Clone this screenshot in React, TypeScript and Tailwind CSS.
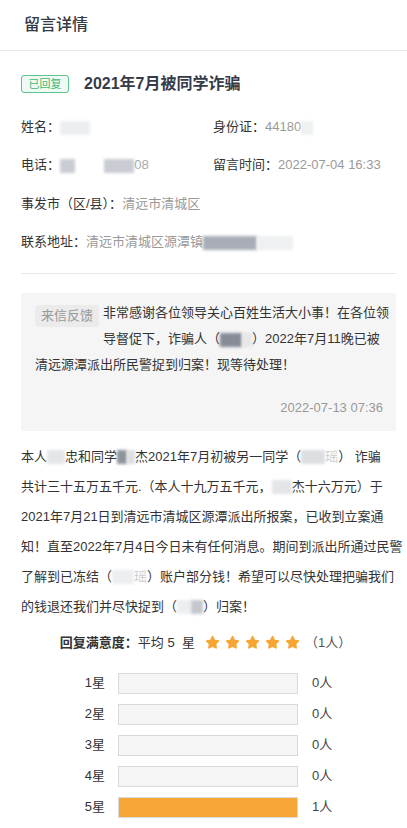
const font = { fontFamily: '"Liberation Sans", "Noto Sans CJK SC", sans-serif' }

function Blur({ w, tone = 'bg-[#c9ccd3]' }: { w: number; tone?: string }) {
  return <span className={`inline-block h-[14px] align-middle blur-[1.5px] ${tone}`} style={{ width: w }} />
}

function Star() {
  return (
    <svg viewBox="0 0 24 24" className="w-[17px] h-[17px]">
      <path
        d="M12 2.6c.5 0 .9.3 1.1.7l2.3 4.7 5.1.8c.9.1 1.3 1.2.6 1.9l-3.7 3.6.9 5.1c.2.9-.8 1.6-1.6 1.2L12 18.2l-4.6 2.4c-.8.4-1.8-.3-1.6-1.2l.9-5.1L3 10.7c-.7-.7-.3-1.8.6-1.9l5.1-.8L11 3.3c.2-.4.6-.7 1-.7z"
        fill="#f7a533"
      />
    </svg>
  )
}

const bars = [
  { label: '1星', count: 0 },
  { label: '2星', count: 0 },
  { label: '3星', count: 0 },
  { label: '4星', count: 0 },
  { label: '5星', count: 1 },
]

export default function App() {
  return (
    <div className="w-[407px] min-h-[828px] bg-white text-[#333]" style={font}>
      {/* Header */}
      <header className="h-[51px] flex items-center px-6 border-b border-[#e8e8e8]">
        <h1 className="text-[16px] font-medium text-[#333a45]">留言详情</h1>
      </header>

      <div className="pl-[21px] pr-[11px]">
        {/* Title */}
        <div className="flex items-center gap-[15px] mt-[24px] h-[18px]">
          <span className="h-[18px] w-[48px] flex items-center justify-center rounded-[3px] border border-[#5cc48c] bg-[#effaf4] text-[11px] text-[#45b774]">
            已回复
          </span>
          <span className="text-[16px] font-bold text-[#363b48]">2021年7月被同学诈骗</span>
        </div>

        {/* Info */}
        <div className="mt-[24px] text-[13px] leading-[20px]">
          <div className="grid grid-cols-[192px_1fr]">
            <div>
              姓名：<Blur w={30} tone="bg-[#eceef1]" />
            </div>
            <div>
              身份证：<span className="text-[#999]">44180</span>
              <Blur w={12} tone="bg-[#eef0f2]" />
            </div>
          </div>
          <div className="grid grid-cols-[192px_1fr] mt-[18px]">
            <div>
              电话：<Blur w={15} /> <Blur w={22} tone="bg-[#ffffff]" /> <Blur w={30} />
              <span className="text-[#aaa]">08</span>
            </div>
            <div>
              留言时间：<span className="text-[#999]">2022-07-04 16:33</span>
            </div>
          </div>
          <div className="mt-[19px]">
            事发市（区/县）：<span className="text-[#999]">清远市清城区</span>
          </div>
          <div className="mt-[18px]">
            联系地址：<span className="text-[#999]">清远市清城区源潭镇</span>
            <Blur w={54} tone="bg-[#a9adb6]" />
            <Blur w={36} tone="bg-[#eef0f2]" />
          </div>
        </div>

        <div className="mt-[21px] border-t border-[#e8e8e8]" />

        {/* Reply */}
        <div className="mt-[19px] bg-[#f5f5f5] pl-[14px] pr-[6px] pt-[7px] pb-[13px]">
          <div className="text-[13px] leading-[26px]">
            <span className="float-left mt-[5px] mb-[5px] mr-[4px] h-[22px] px-[6px] flex items-center rounded-[3px] bg-[#ebebeb] text-[13px] text-[#999]">
              来信反馈
            </span>
            非常感谢各位领导关心百姓生活大小事！在各位领导督促下，诈骗人（<Blur w={22} tone="bg-[#868b95]" />
            <Blur w={10} tone="bg-[#e6e7ea]" />）2022年7月11晚已被清远源潭派出所民警捉到归案！现等待处理！
          </div>
          <div className="clear-both mt-[20px] pr-[7px] text-right text-[13px] text-[#999]">2022-07-13 07:36</div>
        </div>

        {/* Message */}
        <div className="mt-[11px] text-[13px] leading-[30px]">
          <div className="whitespace-nowrap">
            本人<Blur w={18} tone="bg-[#e4e5e8]" />忠和同学<Blur w={10} tone="bg-[#8d929b]" />
            <Blur w={8} tone="bg-[#dcdee2]" />杰2021年7月初被另一同学（<Blur w={24} tone="bg-[#dcdee2]" />
            <span className="text-[#ccc]">瑶</span>） 诈骗
          </div>
          <div className="whitespace-nowrap">
            共计三十五万五千元.（本人十九万五千元，<Blur w={20} tone="bg-[#e4e5e8]" />杰十六万元）于
          </div>
          <div className="whitespace-nowrap">2021年7月21日到清远市清城区源潭派出所报案，已收到立案通</div>
          <div className="whitespace-nowrap">知！直至2022年7月4日今日未有任何消息。期间到派出所通过民警</div>
          <div className="whitespace-nowrap">
            了解到已冻结（<Blur w={22} tone="bg-[#eceef1]" />
            <span className="text-[#ccc]">瑶</span>）账户部分钱！希望可以尽快处理把骗我们
          </div>
          <div className="whitespace-nowrap">
            的钱退还我们并尽快捉到（<Blur w={14} tone="bg-[#eceef1]" />
            <Blur w={12} tone="bg-[#c4c7cd]" />）归案！
          </div>
        </div>
      </div>

      {/* Rating */}
      <div className="mt-[11px] flex items-center justify-center text-[13px] h-[20px] pl-[4px]">
        <span className="font-bold">回复满意度：</span>
        <span>平均 5&nbsp; 星</span>
        <span className="flex gap-[3px] ml-[9px] mr-[4px]">
          <Star />
          <Star />
          <Star />
          <Star />
          <Star />
        </span>
        <span className="text-[#555]">（1人）</span>
      </div>

      <div className="mt-[20px] flex flex-col gap-[10px] items-center pl-[8px]">
        {bars.map((b) => (
          <div key={b.label} className="flex items-center h-[21px] text-[13px]">
            <span className="w-[32px] text-right">{b.label}</span>
            <div className="ml-[13px] w-[180px] h-[21px] border border-[#d9d9d9] bg-[#f5f5f5]">
              <div className="h-full bg-[#f7a738]" style={{ width: b.count > 0 ? '100%' : '0%' }} />
            </div>
            <span className="ml-[14px] w-[30px] text-[#444]">{b.count}人</span>
          </div>
        ))}
      </div>
    </div>
  )
}
